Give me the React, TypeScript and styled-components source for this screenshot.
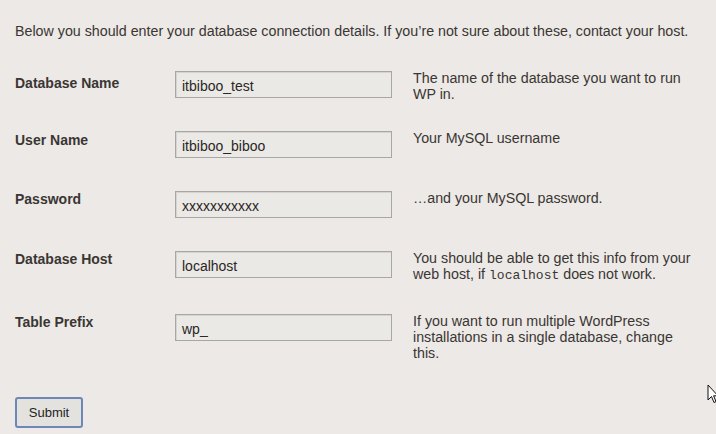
import React from "react";
import styled, { createGlobalStyle } from "styled-components";

const Global = createGlobalStyle`
  html, body { margin: 0; padding: 0; background: #ece9e6; }
  body { font-family: "Liberation Sans", Arial, sans-serif; color: #333; }
`;

const Page = styled.div`
  position: relative;
  width: 716px;
  height: 434px;
  overflow: hidden;
  padding: 23px 0 0 15px;
  box-sizing: border-box;
`;

const Intro = styled.p`
  margin: 0 0 32px;
  font-size: 14.25px;
  line-height: 16px;
  color: #3a3633;
  white-space: nowrap;
`;

const Row = styled.div<{ $h: number }>`
  display: flex;
  align-items: flex-start;
  height: ${(p) => p.$h}px;
`;

const Label = styled.div<{ $top: number }>`
  width: 160px;
  padding-top: ${(p) => p.$top}px;
  font-size: 14px;
  line-height: 16px;
  font-weight: bold;
  color: #3a3633;
`;

const Input = styled.div`
  width: 217px;
  height: 27px;
  box-sizing: border-box;
  border: 1px solid #a9a7a4;
  box-shadow: inset 1px 1px 0 #d6d4d1;
  background: #ebe9e6;
  padding: 6px 0 0 6px;
  font-size: 14px;
  line-height: 16px;
  color: #2a2624;
  margin-right: 21px;
`;

const Desc = styled.div`
  margin-top: -1px;
  width: 282px;
  font-size: 14.25px;
  line-height: 16px;
  color: #3a3633;
`;

const Line = styled.span`
  display: block;
  white-space: nowrap;
`;

const Code = styled.code`
  font-family: "Liberation Mono", "Courier New", monospace;
  font-size: 13px;
  line-height: 16px;
`;

const Button = styled.button`
  margin-top: 22px;
  width: 68px;
  height: 31px;
  border: 2px solid #6f86b8;
  border-radius: 3px;
  background: #e4e2df;
  font-family: "Liberation Sans", Arial, sans-serif;
  font-size: 13px;
  color: #222;
  padding: 0;
`;

const Cursor = styled.svg`
  position: absolute;
  left: 707px;
  top: 384px;
`;

const rows = [
  { label: "Database Name", value: "itbiboo_test", desc: <>The name of the database you want to run WP in.</>, h: 60, top: 4 },
  { label: "User Name", value: "itbiboo_biboo", desc: <>Your MySQL username</>, h: 60, top: 1 },
  { label: "Password", value: "xxxxxxxxxxx", desc: <>…and your MySQL password.</>, h: 60, top: 0 },
  {
    label: "Database Host",
    value: "localhost",
    desc: (
      <>
        <Line>You should be able to get this info from your</Line>
        <Line>
          web host, if <Code>localhost</Code> does not work.
        </Line>
      </>
    ),
    h: 63,
    top: 0,
  },
  {
    label: "Table Prefix",
    value: "wp_",
    desc: <>If you want to run multiple WordPress installations in a single database, change this.</>,
    h: 61,
    top: 0,
  },
];

export default function App() {
  return (
    <>
      <Global />
      <Page>
        <Intro>
          Below you should enter your database connection details. If you’re not sure about these, contact your host.
        </Intro>
        {rows.map((r) => (
          <Row key={r.label} $h={r.h}>
            <Label $top={r.top}>{r.label}</Label>
            <Input>{r.value}</Input>
            <Desc>{r.desc}</Desc>
          </Row>
        ))}
        <Button>Submit</Button>
        <Cursor width="12" height="20" viewBox="0 0 12 20">
          <path d="M1 1 L1 16 L4.5 12.5 L7 18.5 L9 17.6 L6.6 11.8 L11 11.8 Z" fill="#fff" stroke="#111" strokeWidth="1" />
        </Cursor>
      </Page>
    </>
  );
}
